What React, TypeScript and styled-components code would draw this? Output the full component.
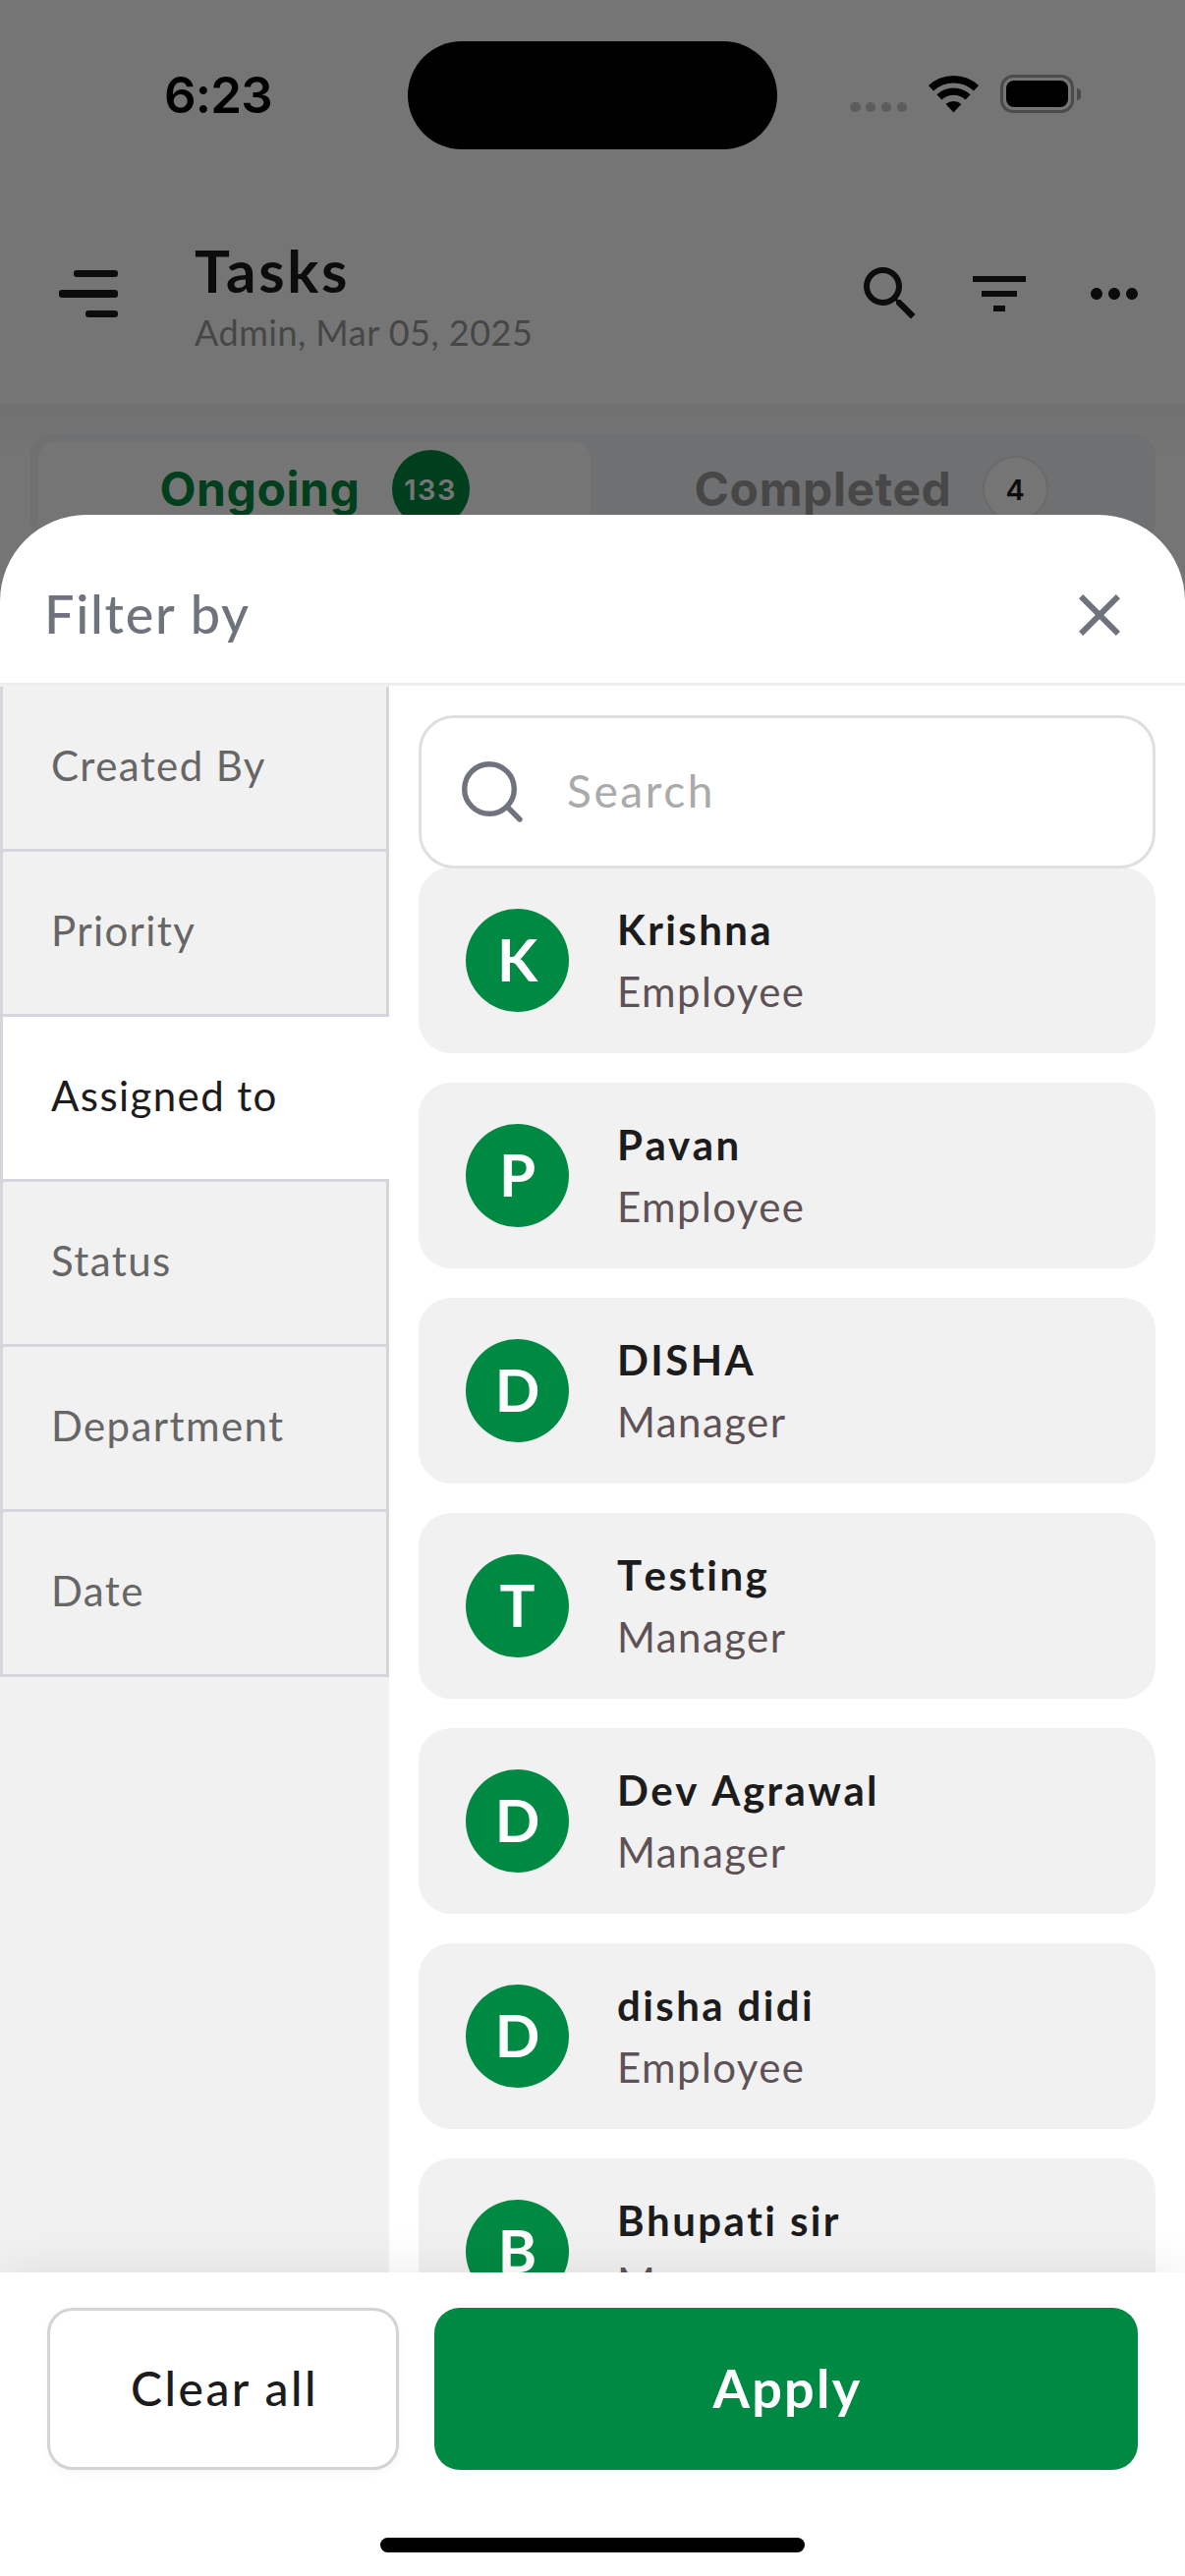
import React, { useState } from "react";
import styled, { createGlobalStyle } from "styled-components";
import { MdClose, MdFilterList, MdMoreHoriz, MdSearch } from "react-icons/md";

const sans = `Lato, "Open Sans", "Liberation Sans", sans-serif`;
const system = `Inter, Roboto, "Liberation Sans", sans-serif`;

const color = {
  green: "#008943",
  ink: "#1c1c1c",
  muted: "#666666",
  slate: "#6f737e",
  surface: "#f1f1f1",
  line: "#d5d6db",
};

const GlobalStyle = createGlobalStyle`
  *, *::before, *::after { box-sizing: border-box; }
  body { margin: 0; background: #fff; font-family: ${sans}; }
  button, input { font: inherit; letter-spacing: inherit; }
  svg { display: block; flex-shrink: 0; }
`;

const Screen = styled.div`
  position: relative;
  width: 1206px;
  height: 2622px;
  overflow: hidden;
  background: #fff;
`;

/* Tasks page behind the sheet */

const StatusBar = styled.div`
  display: grid;
  grid-template-columns: 1fr 376px 1fr;
  align-items: center;
  height: 194px;
`;

const Clock = styled.div`
  padding-left: 167px;
  margin-top: -1px;
  font: 600 51px/60px ${system};
  letter-spacing: -0.8px;
  color: #000;
`;

const Island = styled.div`
  height: 110px;
  border-radius: 55px;
  background: #000;
`;

const StatusIcons = styled.div`
  display: flex;
  align-items: center;
  padding-left: 74px;
  margin-top: -3px;
`;

const CellularDots = styled.div`
  display: flex;
  gap: 5.4px;
  margin: 27px 22px 0 0;
`;

const CellularDot = styled.span`
  width: 10.5px;
  height: 10.5px;
  border-radius: 50%;
  background: #cbcbcb;
`;

const Battery = styled.div`
  display: flex;
  align-items: center;
  gap: 3px;
  margin-left: 22px;
`;

const BatteryShell = styled.div`
  width: 75px;
  height: 39px;
  padding: 3px;
  border: 3px solid #a4a4a4;
  border-radius: 13px;
`;

const BatteryCharge = styled.div`
  height: 100%;
  border-radius: 8px;
  background: #000;
`;

const BatteryTip = styled.div`
  width: 4px;
  height: 12px;
  border-radius: 0 4px 4px 0;
  background: #a4a4a4;
`;

const AppBar = styled.header`
  display: flex;
  align-items: flex-start;
  height: 217px;
  padding: 45px 36px 0 60px;
`;

const MenuButton = styled.div`
  display: flex;
  flex-direction: column;
  align-items: flex-end;
  gap: 13px;
  width: 60px;
  margin-top: 36px;
`;

const MenuBar = styled.span<{ $width: number }>`
  width: ${(p) => p.$width}px;
  height: 7.4px;
  border-radius: 3px;
  background: ${color.ink};
`;

const Heading = styled.div`
  flex: 1;
  padding: 2px 0 0 78px;
`;

const Title = styled.h1`
  margin: 0;
  font-weight: 700;
  font-size: 60px;
  line-height: 68px;
  letter-spacing: 2.7px;
  color: ${color.ink};
`;

const Subtitle = styled.p`
  margin: 0;
  font-size: 36px;
  line-height: 58px;
  letter-spacing: 0.5px;
  color: #9a9a9a;
`;

const Actions = styled.div`
  display: flex;
  margin-top: 24px;
  color: ${color.ink};

  svg:nth-child(2) { margin-left: 39px; }
  svg:nth-child(3) { margin-left: 45px; }
`;

const TabArea = styled.div`
  height: 200px;
  padding: 31px 30px 0 31px;
  background: linear-gradient(#f5f5f5, #fff 56px);
`;

const TabBar = styled.div`
  display: flex;
  gap: 5px;
  height: 111px;
  padding: 8px;
  border-radius: 22px;
  background: #f1f3f6;
`;

const Tab = styled.div<{ $active?: boolean }>`
  flex: 1;
  display: flex;
  align-items: center;
  justify-content: center;
  gap: 32px;
  border-radius: 16px;
  background: ${(p) => (p.$active ? "#fff" : "transparent")};
  color: ${(p) => (p.$active ? color.green : "#9c9c9c")};
  font: 700 48px/60px ${system};
  letter-spacing: 0.6px;
`;

const Count = styled.span<{ $active?: boolean }>`
  display: flex;
  align-items: center;
  justify-content: center;
  width: ${(p) => (p.$active ? 79 : 67)}px;
  height: ${(p) => (p.$active ? 79 : 67)}px;
  padding-top: 2px;
  border: ${(p) => (p.$active ? "none" : "2px solid #e6e6e8")};
  border-radius: 50%;
  background: ${(p) => (p.$active ? color.green : "#fff")};
  color: ${(p) => (p.$active ? "#fff" : color.ink)};
  font-weight: 600;
  font-size: 29px;
  letter-spacing: 1.5px;
`;

const Scrim = styled.div`
  position: absolute;
  inset: 0;
  background: rgba(0, 0, 0, 0.54);
`;

/* Filter sheet */

const Sheet = styled.section`
  position: absolute;
  inset: 524px 0 0;
  display: flex;
  flex-direction: column;
  overflow: hidden;
  border-radius: 88px 88px 0 0;
  background: #fff;
`;

const SheetHeader = styled.header`
  display: flex;
  align-items: center;
  justify-content: space-between;
  flex-shrink: 0;
  height: 174px;
  padding: 30px 51px 0 45px;
  border-bottom: 3px solid #eeeeee;
  color: ${color.slate};

  svg { margin-top: 3px; }
`;

const SheetTitle = styled.h2`
  margin: 0;
  font-weight: 500;
  font-size: 54px;
  line-height: 64px;
  letter-spacing: 1.7px;
`;

const SheetBody = styled.div`
  display: flex;
  flex: 1;
  min-height: 0;
`;

const Sidebar = styled.nav`
  width: 396px;
  flex-shrink: 0;
  padding-top: 1px;
  background: ${color.surface};
`;

const Category = styled.div<{ $active: boolean }>`
  display: flex;
  align-items: center;
  height: 168px;
  padding: 0 0 5px 49px;
  border: 3px solid ${color.line};
  border-top: none;
  border-right-width: ${(p) => (p.$active ? 0 : 3)}px;
  background: ${(p) => (p.$active ? "#fff" : color.surface)};
  color: ${(p) => (p.$active ? color.ink : color.muted)};
  font-size: 42px;
  line-height: 50px;
  letter-spacing: 1.4px;
`;

const Panel = styled.div`
  flex: 1;
  min-width: 0;
  padding: 30px 30px 0;
`;

const SearchBox = styled.label`
  position: relative;
  z-index: 1;
  display: flex;
  align-items: center;
  gap: 44px;
  height: 156px;
  padding: 0 40px;
  border: 3px solid #dfdfdf;
  border-radius: 36px;
  background: #fff;
`;

const SearchInput = styled.input`
  flex: 1;
  min-width: 0;
  height: 60px;
  margin-top: -4px;
  padding: 0;
  border: 0;
  outline: 0;
  background: none;
  font-size: 46px;
  letter-spacing: 2.6px;

  &::placeholder { color: #aaaaaa; opacity: 1; }
`;

const People = styled.ul`
  display: flex;
  flex-direction: column;
  gap: 30px;
  margin: -1px 0 0;
  padding: 0;
  list-style: none;
`;

const Person = styled.li`
  display: flex;
  align-items: center;
  height: 189px;
  flex-shrink: 0;
  padding-left: 48px;
  border-radius: 33px;
  background: ${color.surface};
`;

const Avatar = styled.span`
  display: flex;
  align-items: center;
  justify-content: center;
  width: 105px;
  height: 105px;
  padding-bottom: 4px;
  border-radius: 50%;
  background: ${color.green};
  color: #fff;
  font-weight: 700;
  font-size: 60px;
  line-height: 72px;
`;

const PersonText = styled.div`
  margin: 1px 0 0 49px;
  font-size: 42px;
  line-height: 63px;
`;

const PersonName = styled.div`
  font-weight: 700;
  font-kerning: none;
  letter-spacing: 2.4px;
  color: ${color.ink};
`;

const PersonRole = styled.div`
  letter-spacing: 1.4px;
  color: #5f5256;
`;

const Footer = styled.footer`
  position: relative;
  z-index: 2;
  flex-shrink: 0;
  height: 309px;
  padding: 36px 48px 0;
  background: #fff;
  box-shadow: 0 -6px 45px rgba(0, 0, 0, 0.07);
`;

const ButtonRow = styled.div`
  display: flex;
  gap: 36px;
`;

const Button = styled.button`
  height: 165px;
  border-radius: 26px;
`;

const ClearButton = styled(Button)`
  width: 358px;
  padding: 0 0 3px 3px;
  border: 3px solid #d3d4d6;
  background: #fff;
  box-shadow: 0 3px 8px rgba(16, 24, 40, 0.04);
  color: ${color.ink};
  font-weight: 500;
  font-size: 48px;
  letter-spacing: 2.5px;
`;

const ApplyButton = styled(Button)`
  flex: 1;
  padding: 0 0 2px 3px;
  border: 0;
  background: ${color.green};
  color: #fff;
  font-weight: 700;
  font-size: 54px;
  letter-spacing: 2.3px;
`;

const HomeIndicator = styled.div`
  width: 432px;
  height: 15px;
  margin: 69px auto 0;
  border-radius: 8px;
  background: #000;
`;

const WifiIcon = () => (
  <svg width="51" height="38" viewBox="0 0 51 38" fill="none" stroke="#000" strokeWidth="7.4">
    <path d="M2.5 12.8a33.8 33.8 0 0 1 46 0" />
    <path d="M10.9 21.9a21.4 21.4 0 0 1 29.2 0" />
    <path d="M25.5 37.4 17.6 29a11.6 11.6 0 0 1 15.8 0z" fill="#000" stroke="none" />
  </svg>
);

const SearchIcon = () => (
  <svg width="64" height="64" viewBox="0 0 64 64" fill="none" stroke={color.slate} strokeWidth="5.4">
    <circle cx="29" cy="29" r="25.3" />
    <path d="M47.5 47.5 60 60" strokeLinecap="round" />
  </svg>
);

const categories = ["Created By", "Priority", "Assigned to", "Status", "Department", "Date"];

const people = [
  { name: "Krishna", role: "Employee" },
  { name: "Pavan", role: "Employee" },
  { name: "DISHA", role: "Manager" },
  { name: "Testing", role: "Manager" },
  { name: "Dev Agrawal", role: "Manager" },
  { name: "disha didi", role: "Employee" },
  { name: "Bhupati sir", role: "Manager" },
];

export default function App() {
  const [active, setActive] = useState("Assigned to");

  return (
    <Screen>
      <GlobalStyle />
      <StatusBar>
        <Clock>6:23</Clock>
        <Island />
        <StatusIcons>
          <CellularDots>
            <CellularDot />
            <CellularDot />
            <CellularDot />
            <CellularDot />
          </CellularDots>
          <WifiIcon />
          <Battery>
            <BatteryShell>
              <BatteryCharge />
            </BatteryShell>
            <BatteryTip />
          </Battery>
        </StatusIcons>
      </StatusBar>
      <AppBar>
        <MenuButton>
          <MenuBar $width={45} />
          <MenuBar $width={60} />
          <MenuBar $width={33} />
        </MenuButton>
        <Heading>
          <Title>Tasks</Title>
          <Subtitle>Admin, Mar 05, 2025</Subtitle>
        </Heading>
        <Actions>
          <MdSearch size={72} />
          <MdFilterList size={72} />
          <MdMoreHoriz size={72} />
        </Actions>
      </AppBar>
      <TabArea>
        <TabBar>
          <Tab $active>
            Ongoing <Count $active>133</Count>
          </Tab>
          <Tab>
            Completed <Count>4</Count>
          </Tab>
        </TabBar>
      </TabArea>
      <Scrim />

      <Sheet>
        <SheetHeader>
          <SheetTitle>Filter by</SheetTitle>
          <MdClose size={72} />
        </SheetHeader>
        <SheetBody>
          <Sidebar>
            {categories.map((name) => (
              <Category key={name} $active={name === active} onClick={() => setActive(name)}>
                {name}
              </Category>
            ))}
          </Sidebar>
          <Panel>
            <SearchBox>
              <SearchIcon />
              <SearchInput placeholder="Search" />
            </SearchBox>
            <People>
              {people.map(({ name, role }) => (
                <Person key={name}>
                  <Avatar>{name[0].toUpperCase()}</Avatar>
                  <PersonText>
                    <PersonName>{name}</PersonName>
                    <PersonRole>{role}</PersonRole>
                  </PersonText>
                </Person>
              ))}
            </People>
          </Panel>
        </SheetBody>
        <Footer>
          <ButtonRow>
            <ClearButton>Clear all</ClearButton>
            <ApplyButton>Apply</ApplyButton>
          </ButtonRow>
          <HomeIndicator />
        </Footer>
      </Sheet>
    </Screen>
  );
}
